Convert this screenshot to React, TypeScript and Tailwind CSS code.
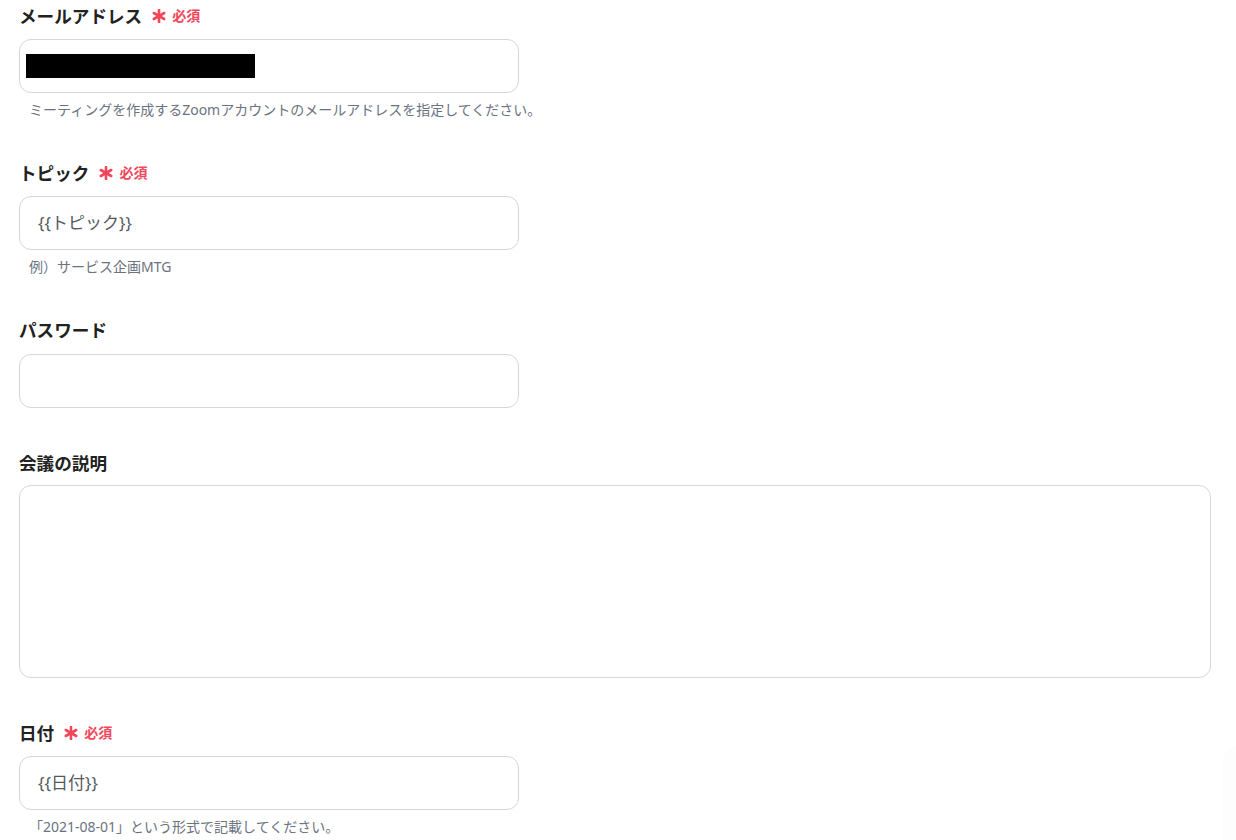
import React from "react";

const FONT = { fontFamily: '"Noto Sans", "Noto Sans CJK JP", sans-serif' };

function Asterisk() {
  return (
    <svg width="14" height="14" viewBox="0 0 14 14" className="shrink-0">
      <g stroke="#f0475b" strokeWidth="2.6" strokeLinecap="round">
        <line x1="7" y1="1" x2="7" y2="13" />
        <line x1="1.8" y1="4" x2="12.2" y2="10" />
        <line x1="1.8" y1="10" x2="12.2" y2="4" />
      </g>
    </svg>
  );
}

function Label({ text, required }: { text: string; required?: boolean }) {
  return (
    <div className="flex h-[24px] items-center">
      <span className="text-[17.6px] font-bold leading-[24px] text-[#222222]">{text}</span>
      {required && (
        <span className="ml-[10px] flex items-center gap-[6px]">
          <Asterisk />
          <span className="text-[14px] font-bold leading-[24px] text-[#f0475b]">必須</span>
        </span>
      )}
    </div>
  );
}

function Help({ text }: { text: string }) {
  return (
    <div className="mt-[7px] h-[20px] pl-[10px] text-[14px] leading-[20px] text-[#6b7280]">{text}</div>
  );
}

function Input({ children, wide }: { children?: React.ReactNode; wide?: boolean }) {
  return (
    <div
      className={
        wide
          ? "mt-[12px] flex h-[54px] w-[500px] items-center rounded-[12px] border border-[#d3d7dd] bg-white"
          : "mt-[11px] flex h-[54px] w-[500px] items-center rounded-[12px] border border-[#d3d7dd] bg-white"
      }
    >
      {children}
    </div>
  );
}

export default function App() {
  return (
    <div className="relative h-[840px] w-[1236px] overflow-hidden bg-white" style={FONT}>
      <div className="flex flex-col pl-[19px] pt-[4px]">
        <div>
          <Label text="メールアドレス" required />
          <Input>
            <div className="ml-[6px] h-[24px] w-[229px] bg-black" />
          </Input>
          <Help text="ミーティングを作成するZoomアカウントのメールアドレスを指定してください。" />
        </div>

        <div className="mt-[41px]">
          <Label text="トピック" required />
          <Input>
            <span className="pl-[18px] text-[17px] text-[#555a60]">{"{{トピック}}"}</span>
          </Input>
          <Help text="例）サービス企画MTG" />
        </div>

        <div className="mt-[41px]">
          <Label text="パスワード" />
          <Input wide />
        </div>

        <div className="mt-[43px]">
          <Label text="会議の説明" />
          <div className="mt-[10px] h-[193px] w-[1192px] rounded-[12px] border border-[#d3d7dd] bg-white" />
        </div>

        <div className="mt-[43px]">
          <Label text="日付" required />
          <Input>
            <span className="pl-[18px] text-[17px] text-[#555a60]">{"{{日付}}"}</span>
          </Input>
          <Help text="「2021-08-01」という形式で記載してください。" />
        </div>
      </div>
      <div className="absolute left-[1222px] top-[745px] h-[130px] w-[40px] rounded-full bg-[#fdfdfd]" />
    </div>
  );
}
